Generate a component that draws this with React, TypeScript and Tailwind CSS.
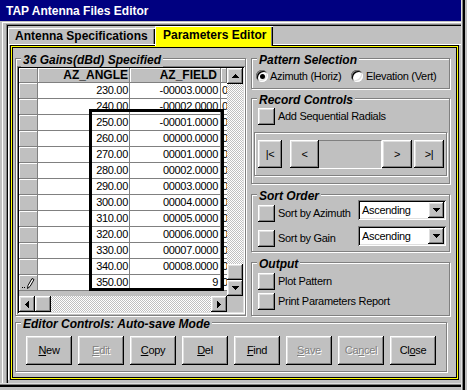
import React from "react";

const R =
  "bg-[#c0c0c0] shadow-[inset_-1px_-1px_#000,inset_1px_1px_#fff,inset_-2px_-2px_#808080,inset_2px_2px_#dfdfdf]";
const R1 = "bg-[#c0c0c0] shadow-[inset_-1px_-1px_#808080,inset_1px_1px_#fff]";
const SUNK =
  "shadow-[inset_1px_1px_#808080,inset_-1px_-1px_#fff,inset_2px_2px_#000,inset_-2px_-2px_#dfdfdf]";
const CHECK =
  "bg-[image:repeating-conic-gradient(#c0c0c0_0%_25%,#ffffff_0%_50%)] bg-[length:2px_2px]";
const TXT = "text-[11px] leading-[13px] tracking-[-0.3px]";

function Group({
  label,
  className = "",
  children,
}: {
  label?: string;
  className?: string;
  children?: React.ReactNode;
}) {
  return (
    <div
      className={`relative border border-[#808080] shadow-[inset_1px_1px_#fff,1px_1px_#fff] ${className}`}
    >
      {label && (
        <span className="absolute -top-[6px] left-[5px] bg-[#c0c0c0] px-[2px] text-[12px] leading-[14px] font-bold italic whitespace-nowrap">
          {label}
        </span>
      )}
      {children}
    </div>
  );
}

function Tri({ dir }: { dir: "up" | "down" | "left" | "right" }) {
  if (dir === "up" || dir === "down") {
    return (
      <svg width="7" height="4" viewBox="0 0 7 4" shapeRendering="crispEdges">
        <polygon
          points={dir === "up" ? "3.5,0 7,4 0,4" : "0,0 7,0 3.5,4"}
          fill="#000"
        />
      </svg>
    );
  }
  return (
    <svg width="4" height="7" viewBox="0 0 4 7" shapeRendering="crispEdges">
      <polygon points={dir === "left" ? "4,0 4,7 0,3.5" : "0,0 4,3.5 0,7"} fill="#000" />
    </svg>
  );
}

function ScrollBtn({ dir }: { dir: "up" | "down" | "left" | "right" }) {
  return (
    <div className={`w-[16px] h-[16px] shrink-0 flex items-center justify-center ${R}`}>
      <Tri dir={dir} />
    </div>
  );
}

function Square() {
  return <div className={`w-[17px] h-[17px] shrink-0 ${R}`} />;
}

function SqRow({ label, className = "" }: { label: string; className?: string }) {
  return (
    <div className={`flex items-center ${className}`}>
      <Square />
      <span className={`ml-[3px] whitespace-nowrap ${TXT}`}>{label}</span>
    </div>
  );
}

function Radio({ checked }: { checked?: boolean }) {
  return (
    <div className="w-[12px] h-[12px] rounded-full bg-white shadow-[inset_1px_1px_#808080,inset_-1px_-1px_#fff,inset_2px_2px_#000,inset_-2px_-2px_#dfdfdf] flex items-center justify-center shrink-0">
      {checked && <div className="w-[5px] h-[5px] rounded-full bg-black" />}
    </div>
  );
}

function Select() {
  return (
    <div className={`w-[88px] h-[20px] bg-white p-[2px] flex ${SUNK}`}>
      <span className={`flex-1 pl-[2px] ${TXT} leading-[16px]`}>Ascending</span>
      <ScrollBtn dir="down" />
    </div>
  );
}

function Btn({ children, disabled }: { children: React.ReactNode; disabled?: boolean }) {
  return (
    <div
      className={`w-[46px] h-[29px] ${R} flex items-center justify-center ${TXT} ${
        disabled ? "text-[#808080] [text-shadow:1px_1px_#fff]" : ""
      }`}
    >
      <span>{children}</span>
    </div>
  );
}

function NavBtn({ label, w }: { label: string; w: string }) {
  return (
    <div className={`${w} h-[28px] ${R} flex items-center justify-center ${TXT}`}>{label}</div>
  );
}

const rows: [string, string][] = [
  ["230.00", "-00003.0000"],
  ["240.00", "-00002.0000"],
  ["250.00", "-00001.0000"],
  ["260.00", "00000.0000"],
  ["270.00", "00001.0000"],
  ["280.00", "00002.0000"],
  ["290.00", "00003.0000"],
  ["300.00", "00004.0000"],
  ["310.00", "00005.0000"],
  ["320.00", "00006.0000"],
  ["330.00", "00007.0000"],
  ["340.00", "00008.0000"],
  ["350.00", "9"],
];

function Pencil() {
  return (
    <svg width="19" height="16" viewBox="0 0 19 16">
      <rect x="3" y="12" width="1" height="1" fill="#000" />
      <rect x="5" y="12" width="1" height="1" fill="#000" />
      <path
        d="M8.5 13.5 L9 10.5 L13 3.5 L15 4.5 L11 11.5 Z"
        fill="#fff"
        stroke="#000"
        strokeWidth="1"
        strokeLinejoin="round"
      />
    </svg>
  );
}

function Grid() {
  return (
    <div className={`w-[228px] h-[248px] p-[2px] ${SUNK} ml-[1px] mt-[7px]`}>
      <div className="flex">
        <div className="w-[208px] flex flex-col">
          <div className="relative h-[228px] overflow-hidden bg-[#c0c0c0]">
            <div className="flex h-[15px]">
              <div className={`w-[19px] ${R1}`} />
              <div className={`w-[92px] ${R1} text-right pr-[2px] font-bold text-[12px] leading-[15px]`}>
                AZ_ANGLE
              </div>
              <div className={`w-[91px] ${R1} text-right pr-[4px] font-bold text-[12px] leading-[15px]`}>
                AZ_FIELD
              </div>
              <div className={`w-[6px] ${R1}`} />
            </div>
            {rows.map(([a, f], i) => (
              <div key={a} className="flex h-[16px]">
                <div className={`w-[19px] ${R1}`}>{i === rows.length - 1 && <Pencil />}</div>
                <div
                  className={`w-[92px] bg-white border-r border-b border-[#808080] text-right pr-[1px] ${TXT} leading-[15px]`}
                >
                  {a}
                </div>
                <div
                  className={`w-[91px] bg-white border-r border-b border-[#808080] text-right pr-[2px] ${TXT} leading-[15px]`}
                >
                  {f}
                </div>
                <div
                  className={`w-[6px] bg-white border-b border-[#808080] overflow-hidden pl-[1px] ${TXT} leading-[15px]`}
                >
                  0
                </div>
              </div>
            ))}
            <div className="absolute left-[70px] top-[41px] w-[135px] h-[182px] border-[3px] border-black pointer-events-none" />
          </div>
          <div className="flex h-[16px]">
            <ScrollBtn dir="left" />
            <div className={`w-[16px] h-[16px] ${R}`} />
            <div className={`flex-1 ${CHECK}`} />
            <ScrollBtn dir="right" />
          </div>
        </div>
        <div className="w-[16px] flex flex-col">
          <div className="h-[228px] flex flex-col">
            <ScrollBtn dir="up" />
            <div className={`flex-1 ${CHECK}`} />
            <div className={`w-[16px] h-[16px] ${R}`} />
            <ScrollBtn dir="down" />
          </div>
          <div className="h-[16px] bg-[#c0c0c0]" />
        </div>
      </div>
    </div>
  );
}

export default function App() {
  return (
    <div className="w-[467px] h-[390px] bg-[#c0c0c0] overflow-hidden font-['Liberation_Sans',Arial,sans-serif] text-black flex">
      <div className="w-[461px] flex flex-col">
        <div className="h-[21px] shrink-0 bg-[#000080] text-white text-[12px] font-bold flex items-center pl-[6px]">
          TAP Antenna Files Editor
        </div>
        <div className="h-[362px] shrink-0 pt-[1px] pl-[2px] flex flex-col">
          <div className="flex-1 border-l border-t border-white pl-[3px] pt-[1px] flex flex-col">
            <div className="flex-1 border-l border-t border-[#808080] flex flex-col">
              <div className="flex-1 border-l border-t border-black flex flex-col">
                {/* tabs */}
                <div className="h-[18px] flex items-start relative z-10 shrink-0">
                  <div className="mt-[2px] h-[16px] w-[147px] bg-[#c0c0c0] border-l border-t border-white shadow-[inset_-1px_0_#000,inset_-2px_0_#808080] pl-[6px] text-[12px] font-bold leading-[15px] whitespace-nowrap">
                    Antenna Specifications
                  </div>
                  <div className="h-[20px] w-[118px] bg-[#ffff00] border-l border-t border-white shadow-[inset_-1px_0_#000,inset_-2px_0_#808080] pl-[7px] text-[12px] font-bold leading-[17px] whitespace-nowrap">
                    Parameters Editor
                  </div>
                </div>
                {/* panel */}
                <div className="w-[453px] border-l border-t border-white pl-[1px] pr-[2px]">
                  <div className="border border-black">
                    <div className="border border-[#ffff00]">
                      <div className="border border-black h-[331px] pl-[2px] pt-[10px]">
                        <div className="flex gap-[5px]">
                          <Group label="36 Gains(dBd) Specified" className="w-[231px] h-[258px]">
                            <Grid />
                          </Group>
                          <div className="w-[199px] flex flex-col">
                            <Group label="Pattern Selection" className="h-[31px]">
                              <div className="flex items-center h-[14px] mt-[10px] pl-[4px]">
                                <div className="w-[95px] flex items-center">
                                  <Radio checked />
                                  <span className={`ml-[2px] whitespace-nowrap ${TXT}`}>Azimuth (Horiz)</span>
                                </div>
                                <Radio />
                                <span className={`ml-[3px] whitespace-nowrap ${TXT}`}>Elevation (Vert)</span>
                              </div>
                            </Group>
                            <Group label="Record Controls" className="h-[86px] mt-[9px]">
                              <SqRow label="Add Sequential Radials" className="ml-[6px] mt-[9px]" />
                              <div className="ml-[2px] mt-[7px] w-[193px] h-[44px] border border-[#808080] shadow-[inset_1px_1px_#fff,1px_1px_#fff]">
                                <div className="flex items-start mt-[7px] ml-[3px]">
                                  <NavBtn label="|<" w="w-[24px]" />
                                  <div className="w-[8px]" />
                                  <NavBtn label="<" w="w-[29px]" />
                                  <div className="w-[63px] h-[29px] border-t border-t-[#808080] border-b border-b-white border-r border-r-white" />
                                  <NavBtn label=">" w="w-[30px]" />
                                  <div className="w-[2px]" />
                                  <NavBtn label=">|" w="w-[30px]" />
                                </div>
                              </div>
                            </Group>
                            <Group label="Sort Order" className="h-[58px] mt-[10px]">
                              <div className="flex items-start mt-[5px]">
                                <SqRow label="Sort by Azimuth" className="ml-[6px] mt-[5px] w-[100px]" />
                                <Select />
                              </div>
                              <div className="flex items-start mt-[4px]">
                                <SqRow label="Sort by Gain" className="ml-[6px] mt-[4px] w-[100px]" />
                                <Select />
                              </div>
                            </Group>
                            <Group label="Output" className="h-[54px] mt-[10px]">
                              <SqRow label="Plot Pattern" className="ml-[6px] mt-[10px]" />
                              <SqRow label="Print Parameters Report" className="ml-[6px] mt-[3px]" />
                            </Group>
                          </div>
                        </div>
                        <Group label="Editor Controls: Auto-save Mode" className="w-[432px] h-[50px] mt-[6px]">
                          <div className="flex gap-[6px] mt-[13px] ml-[10px]">
                            <Btn>
                              <u>N</u>ew
                            </Btn>
                            <Btn disabled>
                              <u>E</u>dit
                            </Btn>
                            <Btn>
                              <u>C</u>opy
                            </Btn>
                            <Btn>
                              <u>D</u>el
                            </Btn>
                            <Btn>
                              <u>F</u>ind
                            </Btn>
                            <Btn disabled>
                              <u>S</u>ave
                            </Btn>
                            <Btn disabled>
                              Ca<u>n</u>cel
                            </Btn>
                            <Btn>
                              Cl<u>o</u>se
                            </Btn>
                          </div>
                        </Group>
                      </div>
                    </div>
                  </div>
                </div>
              </div>
            </div>
          </div>
        </div>
        <div className="h-[1px] shrink-0 bg-[#dfdfdf]" />
        <div className="h-[1px] shrink-0 bg-[#808080]" />
        <div className="h-[2px] shrink-0 bg-black" />
      </div>
      <div className="w-[1px] bg-[#dfdfdf]" />
      <div className="w-[1px] bg-[#808080]" />
      <div className="w-[2px] bg-black" />
      <div className="w-[2px]" />
    </div>
  );
}
